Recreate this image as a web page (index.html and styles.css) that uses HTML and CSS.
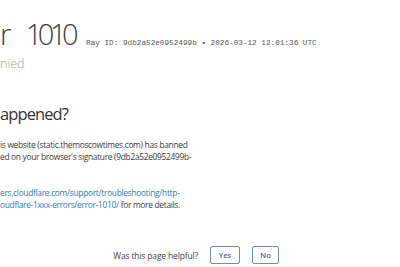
FILE: index.html
```html
<!DOCTYPE html>
<html lang="en">
<head>
<meta charset="utf-8">
<title>Access denied | static.themoscowtimes.com used Cloudflare to restrict access</title>
<link rel="stylesheet" href="styles.css">
</head>
<body>
<main class="page">
  <header class="error-header">
    <div class="title-row">
      <h1 class="error-title">r 1010</h1>
      <span class="ray-id">Ray ID: 9db2a52e0952499b &bull; 2026-03-12 12:01:36 UTC</span>
    </div>
    <h2 class="error-subtitle">nied</h2>
  </header>

  <section class="what-happened">
    <h2 class="section-title">appened?</h2>
    <p class="text-block">
      <span class="line">is website (static.themoscowtimes.com) has banned</span>
      <span class="line">ed on your browser's signature (9db2a52e0952499b-</span>
    </p>
    <p class="text-block details">
      <span class="line"><a class="link" href="#">ers.cloudflare.com/support/troubleshooting/http-</a></span>
      <span class="line"><a class="link" href="#">oudflare-1xxx-errors/error-1010/</a> for more details.</span>
    </p>
  </section>

  <footer class="feedback">
    <span class="feedback-label">Was this page helpful?</span>
    <button class="feedback-btn yes" type="button">Yes</button>
    <button class="feedback-btn no" type="button">No</button>
  </footer>
</main>
</body>
</html>
```

FILE: styles.css
```css
html, body {
  margin: 0;
  padding: 0;
  background: #ffffff;
}

body {
  font-family: "Open Sans", "Noto Sans", "Liberation Sans", sans-serif;
  color: #404040;
  width: 400px;
  height: 267px;
  overflow: hidden;
}

.page {
  display: flex;
  flex-direction: column;
}

.error-header {
  display: flex;
  flex-direction: column;
  padding-top: 16px;
}

.title-row {
  display: flex;
  align-items: baseline;
  white-space: nowrap;
}

.error-title {
  margin: 0;
  font-size: 29px;
  line-height: 36px;
  font-weight: 300;
  letter-spacing: -4.5px;
  word-spacing: 16px;
  color: #404040;
}

.ray-id {
  margin-left: 12px;
  font-family: "Liberation Mono", "DejaVu Sans Mono", monospace;
  font-size: 7.7px;
  color: #555555;
}

.error-subtitle {
  margin: 4px 0 0;
  font-size: 12.5px;
  line-height: 16px;
  font-weight: 300;
  color: #a0a0a0;
}

.what-happened {
  display: flex;
  flex-direction: column;
}

.section-title {
  margin: 31px 0 0;
  font-size: 16.5px;
  line-height: 22px;
  font-weight: 400;
  letter-spacing: -0.9px;
  color: #333333;
}

.text-block {
  margin: 14px 0 0;
  display: flex;
  flex-direction: column;
  font-size: 8.4px;
  line-height: 11.5px;
  letter-spacing: -0.3px;
  color: #3a3a3a;
  white-space: nowrap;
}

.text-block.details {
  margin-top: 25px;
}

.link {
  color: #2f7bbf;
  text-decoration: none;
}

.feedback {
  margin-top: 36px;
  display: flex;
  align-items: center;
  justify-content: flex-end;
  padding-right: 121px;
  gap: 12px;
  font-size: 8.4px;
  letter-spacing: -0.1px;
  color: #404040;
}

.feedback-btn {
  font-family: inherit;
  height: 18px;
  padding: 0;
  background: #ffffff;
  border: 1px solid #6a8db5;
  border-radius: 2px;
  color: #3b6ea5;
  font-size: 7.5px;
  font-weight: 600;
  cursor: pointer;
}

.feedback-btn.yes {
  width: 30px;
}

.feedback-btn.no {
  width: 27px;
}
```
